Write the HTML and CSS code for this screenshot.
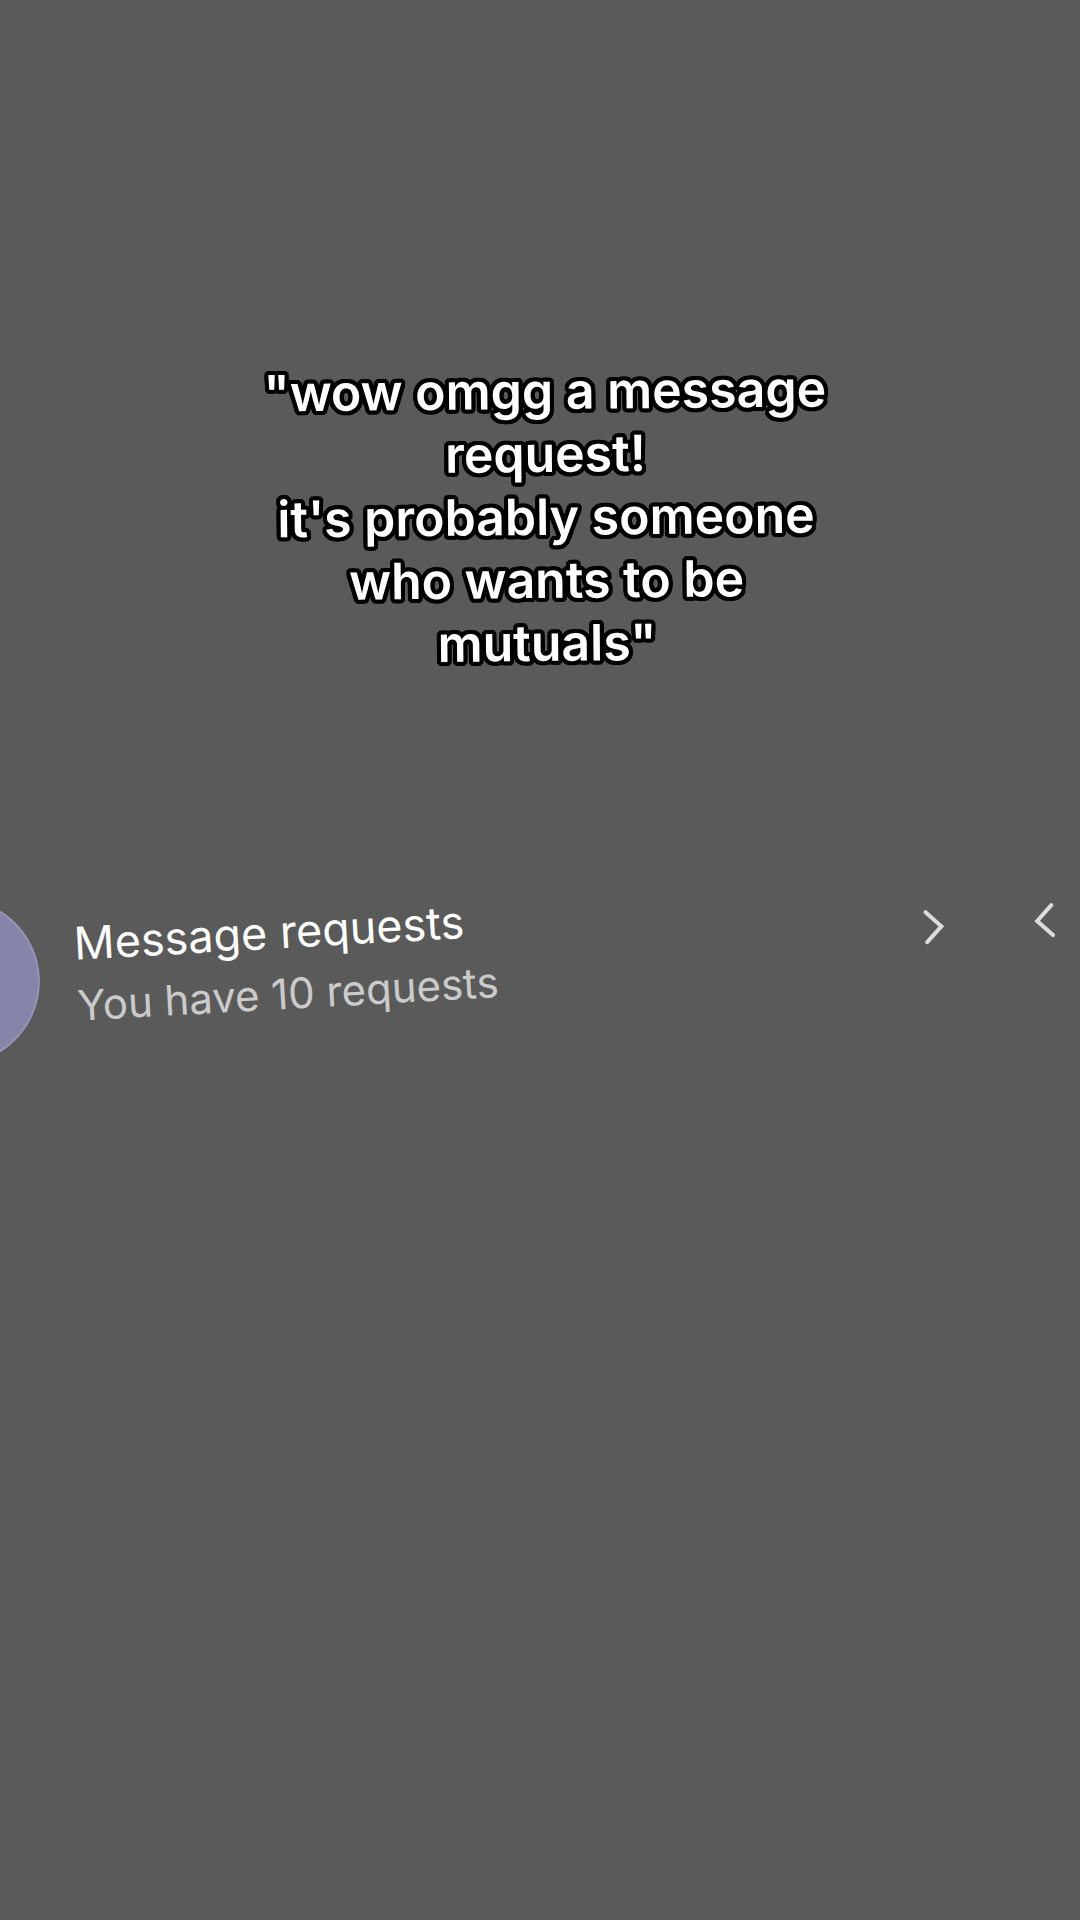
FILE: index.html
```
<!DOCTYPE html>
<html lang="en">
<head>
    <meta charset="UTF-8">
    <meta name="viewport" content="width=device-width, initial-scale=1.0">
    <title>Message requests</title>
    <link rel="stylesheet" href="styles.css">
</head>
<body>
    <main class="screen">
        <p class="caption">"wow omgg a message<br>request!<br>it's probably someone<br>who wants to be<br>mutuals"</p>

        <div class="request-row">
            <a class="request-link" href="#requests">
                <span class="avatar"></span>
                <span class="request-text">
                    <span class="title">Message requests</span>
                    <span class="subtitle">You have 10 requests</span>
                </span>
                <svg class="chevron" viewBox="0 0 24 40" aria-hidden="true">
                    <path d="M4 5 L19 20 L4 35"/>
                </svg>
            </a>
            <button class="back" type="button" aria-label="Back">
                <svg class="chevron" viewBox="0 0 24 40" aria-hidden="true">
                    <path d="M20 5 L5 20 L20 35"/>
                </svg>
            </button>
        </div>
    </main>
</body>
</html>
```
FILE: styles.css
```
* {
    box-sizing: border-box;
}
body {
    margin: 0;
    min-height: 100vh;
    background-color: #5a5a5a;
    color: white;
    font-family: Inter, Roboto, Arial, sans-serif;
    overflow-x: hidden;
}
.screen {
    padding-top: 360px;
    overflow: hidden;
}
/* ring of hard shadows gives the rounded black outline */
.caption {
    margin: 0 0 228px;
    padding-left: 12px;
    font-size: 50px;
    font-weight: 600;
    line-height: 63px;
    text-align: center;
    text-shadow:
        4px 0 black, -4px 0 black, 0 4px black, 0 -4px black,
        3px 3px black, -3px 3px black, 3px -3px black, -3px -3px black,
        4px 2px black, -4px 2px black, 4px -2px black, -4px -2px black,
        2px 4px black, -2px 4px black, 2px -4px black, -2px -4px black;
    transform: rotate(-0.5deg);
}
.request-row {
    display: flex;
    align-items: center;
    margin-left: -126px;
    padding-right: 22px;
    transform: rotate(-3.2deg);
    transform-origin: left center;
}
.request-link {
    display: flex;
    flex: 1;
    align-items: center;
    color: white;
    text-decoration: none;
}
.avatar {
    width: 166px;
    height: 166px;
    border: 2px solid #9594b8;
    border-radius: 50%;
    background-color: #8685a9;
}
.request-text {
    display: flex;
    flex: 1;
    flex-direction: column;
    margin-left: 36px;
    line-height: 62px;
}
.title {
    font-size: 45px;
}
.subtitle {
    color: #cbcbcb;
    font-size: 42px;
}
.chevron {
    display: block;
    width: 24px;
    height: 40px;
    fill: none;
    stroke: #dcdcdc;
    stroke-width: 4px;
    stroke-linecap: round;
}
.back {
    margin-left: 86px;
    padding: 0;
    border: none;
    background: none;
    cursor: pointer;
}
```
